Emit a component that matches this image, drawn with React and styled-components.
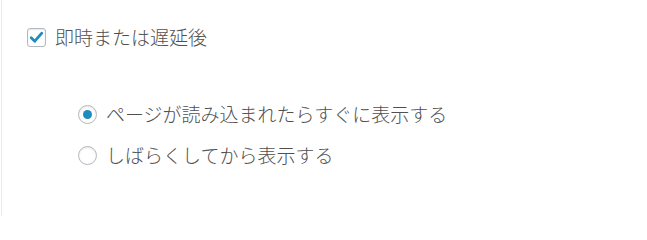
import React, { useState } from "react";
import styled, { createGlobalStyle } from "styled-components";

const GlobalStyle = createGlobalStyle`
    html, body {
        margin: 0;
        padding: 0;
        background: #fff;
    }
    body {
        font-family: "Noto Sans CJK JP", "Noto Sans", sans-serif;
        color: #555;
    }
`;

const Panel = styled.div`
    height: 216px;
    margin-left: 1px;
    border-left: 1px solid #ececec;
    padding: 25px 0 0 25px;
    box-sizing: border-box;
`;

const Row = styled.label`
    display: flex;
    align-items: center;
    gap: 9px;
    font-size: 19px;
    line-height: 24px;
    font-weight: 300;
    color: #505050;
    cursor: pointer;
`;

const Options = styled.div`
    display: flex;
    flex-direction: column;
    gap: 17px;
    margin: 53px 0 0 51px;
`;

const Box = styled.span`
    width: 17px;
    height: 17px;
    border: 1px solid #b4b9be;
    border-radius: 3px;
    box-shadow: inset 0 1px 2px rgba(0, 0, 0, 0.1);
    display: flex;
    align-items: center;
    justify-content: center;
    flex-shrink: 0;
`;

const Radio = styled.span`
    width: 17px;
    height: 17px;
    border: 1px solid #b4b9be;
    border-radius: 50%;
    box-shadow: inset 0 1px 2px rgba(0, 0, 0, 0.1);
    display: flex;
    align-items: center;
    justify-content: center;
    flex-shrink: 0;
    &::after {
        content: "";
        width: 9px;
        height: 9px;
        border-radius: 50%;
        background: ${(p) => (p.$checked ? "#1e8cbe" : "transparent")};
    }
`;

const Check = () => (
    <svg width="17" height="17" viewBox="0 0 17 17">
        <path d="M3.2 8.8 L6.8 12.2 L13.8 4.2" fill="none" stroke="#1e8cbe" strokeWidth="2.8" strokeLinecap="round" strokeLinejoin="round" />
    </svg>
);

const choices = ["ページが読み込まれたらすぐに表示する", "しばらくしてから表示する"];

const App = () => {
    const [mode, setMode] = useState(0);
    return (
        <>
            <GlobalStyle />
            <Panel>
                <Row>
                    <Box><Check /></Box>
                    即時または遅延後
                </Row>
                <Options>
                    {choices.map((c, i) => (
                        <Row key={i} onClick={() => setMode(i)}>
                            <Radio $checked={mode === i} />
                            {c}
                        </Row>
                    ))}
                </Options>
            </Panel>
        </>
    );
};

export default App;
